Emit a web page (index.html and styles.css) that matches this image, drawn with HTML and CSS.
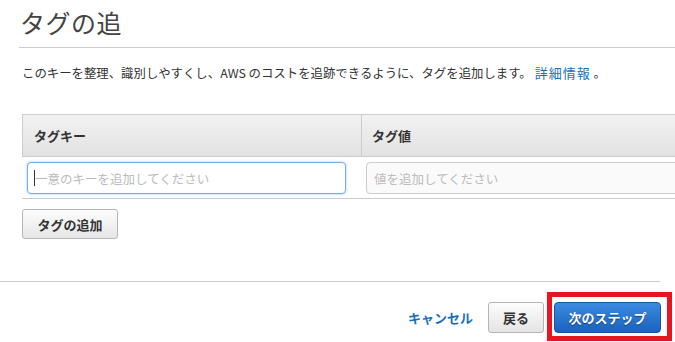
FILE: index.html
```html
<!DOCTYPE html>
<html lang="ja">
<head>
<meta charset="utf-8">
<link rel="stylesheet" href="styles.css">
</head>
<body>
<div class="page">
  <h1 class="title">タグの追</h1>
  <p class="desc">このキーを整理、識別しやすくし、AWS のコストを追跡できるように、タグを追加します。<a href="#" class="link">詳細情報</a> 。</p>

  <div class="tags">
    <div class="tags-inner">
      <div class="tags-head">
        <div class="th th-key">タグキー</div>
        <div class="th th-val">タグ値</div>
      </div>
      <div class="tags-row">
        <div class="td td-key">
          <div class="field">
            <input class="input input-focus" type="text" placeholder="一意のキーを追加してください">
            <span class="caret"></span>
          </div>
        </div>
        <div class="td td-val">
          <input class="input input-plain" type="text" placeholder="値を追加してください">
        </div>
      </div>
    </div>
  </div>

  <button class="btn btn-add" type="button">タグの追加</button>

  <div class="footer">
    <div class="actions">
      <a href="#" class="cancel">キャンセル</a>
      <button class="btn btn-back" type="button">戻る</button>
      <span class="highlight">
        <button class="btn btn-next" type="button">次のステップ</button>
      </span>
    </div>
  </div>
</div>
</body>
</html>
```

FILE: styles.css
```css
html, body {
  margin: 0;
  padding: 0;
  background: #ffffff;
  overflow: hidden;
}

body {
  font-family: "Noto Sans CJK JP", "Liberation Sans", sans-serif;
  color: #333333;
  width: 675px;
  height: 342px;
}

.page {
  width: 675px;
  overflow: hidden;
}

.title {
  margin: 0 0 0 19px;
  padding: 4px 0 7px 1px;
  font-size: 25px;
  line-height: 36px;
  font-weight: normal;
  color: #444444;
  border-bottom: 1px solid #cccccc;
  letter-spacing: 0.5px;
}

.desc {
  margin: 16px 0 0 22px;
  font-size: 12.4px;
  line-height: 18px;
  color: #333333;
  white-space: nowrap;
}

.link {
  color: #1a6fb8;
  text-decoration: none;
  font-size: 13px;
  letter-spacing: 1px;
  margin-left: 3px;
}

.tags {
  margin: 32px 0 0 22px;
  width: 653px;
  overflow: hidden;
}

.tags-inner {
  width: 700px;
}

.tags-head {
  display: flex;
  height: 41px;
  border: 1px solid #cccccc;
  border-right: none;
  background: linear-gradient(#f2f2f2, #e2e2e2);
}

.th {
  display: flex;
  align-items: center;
  font-size: 13px;
  font-weight: bold;
  color: #333333;
}

.th-key {
  width: 327px;
  padding-left: 11px;
}

.th-val {
  flex: 1;
  padding-left: 10px;
  border-left: 1px solid #cccccc;
}

.tags-row {
  display: flex;
  height: 41px;
  border-bottom: 1px solid #cccccc;
}

.td {
  padding-top: 5px;
  box-sizing: border-box;
}

.td-key {
  width: 339px;
  padding-left: 5px;
}

.td-val {
  flex: 1;
  padding-left: 5px;
}

.field {
  position: relative;
  width: 319px;
}

.input {
  display: block;
  box-sizing: border-box;
  width: 319px;
  height: 32px;
  margin: 0;
  padding: 0 0 0 7px;
  font-family: "Noto Sans CJK JP", "Liberation Sans", sans-serif;
  font-size: 12.5px;
  color: #333333;
  border-radius: 4px;
  outline: none;
}

.input::placeholder {
  color: #bbbbbb;
}

.input-focus {
  border: 1px solid #74aeea;
  background: #ffffff;
  box-shadow: 0 0 3px rgba(100, 160, 230, 0.55);
}

.input-plain {
  border: 1px solid #cccccc;
  background: #fafafa;
}

.caret {
  position: absolute;
  left: 7px;
  top: 8px;
  width: 1px;
  height: 16px;
  background: #333333;
}

.btn {
  font-family: "Noto Sans CJK JP", "Liberation Sans", sans-serif;
  font-size: 13px;
  font-weight: bold;
  cursor: pointer;
  margin: 0;
  box-sizing: border-box;
}

.btn-add {
  display: block;
  margin: 10px 0 0 22px;
  width: 96px;
  height: 30px;
  padding: 0;
  color: #333333;
  background: linear-gradient(#fdfdfd, #e6e6e6);
  border: 1px solid #b5b5b5;
  border-radius: 3px;
}

.footer {
  margin-top: 42px;
  width: 660px;
  border-top: 1px solid #cccccc;
}

.actions {
  display: flex;
  justify-content: flex-end;
  align-items: center;
  padding-top: 10px;
  margin-right: -12px;
}

.cancel {
  color: #1a6fb8;
  text-decoration: none;
  font-size: 13px;
  font-weight: bold;
  margin-right: 15px;
  margin-top: 2px;
}

.btn-back {
  width: 56px;
  height: 31px;
  padding: 0;
  color: #333333;
  background: linear-gradient(#fdfdfd, #e4e4e4);
  border: 1px solid #b5b5b5;
  border-radius: 3px;
  margin-right: 3px;
  margin-top: 2px;
}

.highlight {
  display: flex;
  border: 5px solid #e8141e;
  padding: 5px 6px 3px 2px;
}

.btn-next {
  width: 107px;
  height: 31px;
  padding: 0;
  color: #ffffff;
  text-shadow: 0 1px 1px rgba(0, 0, 0, 0.45);
  background: linear-gradient(#3a8ae0, #1b62bd);
  border: 1px solid #1a52a0;
  border-radius: 4px;
}
```
